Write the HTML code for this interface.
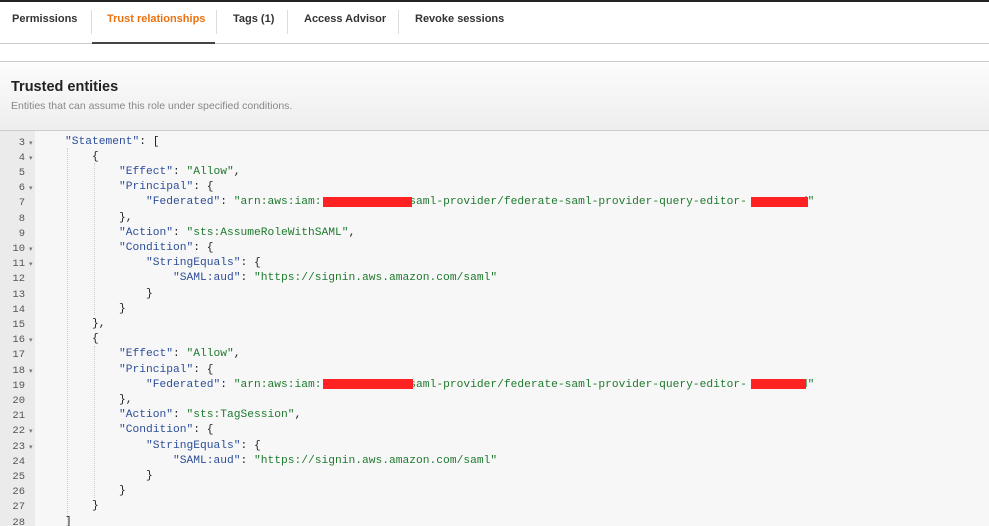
<!DOCTYPE html>
<html><head><style>
*{margin:0;padding:0;box-sizing:border-box}
body{width:989px;height:526px;overflow:hidden;background:#fff;font-family:"Liberation Sans",sans-serif;position:relative}
.top{position:absolute;left:0;top:0;width:989px;height:2px;background:#222}
.tabs{position:absolute;left:0;top:2px;width:989px;height:42px;border-bottom:1px solid #ccc}
.tab{position:absolute;top:11px;font-size:11px;font-weight:bold;color:#333}
.sep{position:absolute;top:8px;width:1px;height:24px;background:#ddd}
.ul{position:absolute;left:92px;top:40px;width:123px;height:2px;background:#444}
.hdr{position:absolute;left:0;top:61px;width:989px;height:70px;border-top:1px solid #ccc;border-bottom:1px solid #ccc;background:linear-gradient(#fcfcfc,#eeeeee)}
.hdr h2{position:absolute;left:11px;top:17px;font-size:14.5px;color:#222}
.hdr p{position:absolute;left:11px;top:38px;font-size:10.5px;color:#888}
.code{position:absolute;left:0;top:131px;width:989px;height:395px;background:#f7f7f7;overflow:hidden}
.gut{position:absolute;left:0;top:0;width:35px;height:395px;background:#ebebeb}
.ln{position:absolute;left:0;width:25px;text-align:right;font-family:"Liberation Mono",monospace;font-size:10.5px;color:#555}
.ar{position:absolute;left:29px;font-size:7px;color:#777}
.cl{position:absolute;white-space:pre;font-family:"Liberation Mono",monospace;font-size:11.25px;color:#222}
.k{color:#2d4e99}.s{color:#1f7a2e}
.red{position:absolute;background:#f22;height:10px}
.g{position:absolute;width:0;border-left:1px dotted #ccc}
</style></head><body>
<div class="top"></div>
<div class="tabs">
<span class="tab" style="left:12px">Permissions</span>
<span class="sep" style="left:91px"></span>
<span class="tab" style="left:107px;color:#ec7211">Trust relationships</span>
<span class="sep" style="left:216px"></span>
<span class="tab" style="left:233px">Tags (1)</span>
<span class="sep" style="left:287px"></span>
<span class="tab" style="left:304px">Access Advisor</span>
<span class="sep" style="left:398px"></span>
<span class="tab" style="left:415px">Revoke sessions</span>
<div class="ul"></div>
</div>
<div class="hdr"><h2>Trusted entities</h2><p>Entities that can assume this role under specified conditions.</p></div>
<div class="code">
<div class="gut"></div>
<div id="c"></div>
</div>
<script>
var L=[
[3,1,1,'<span class="k">"Statement"</span>: ['],
[4,2,1,'{'],
[5,3,0,'<span class="k">"Effect"</span>: <span class="s">"Allow"</span>,'],
[6,3,1,'<span class="k">"Principal"</span>: {'],
[7,4,0,'<span class="k">"Federated"</span>: <span class="s">"arn:aws:iam:             saml-provider/federate-saml-provider-query-editor-        d"</span>'],
[8,3,0,'},'],
[9,3,0,'<span class="k">"Action"</span>: <span class="s">"sts:AssumeRoleWithSAML"</span>,'],
[10,3,1,'<span class="k">"Condition"</span>: {'],
[11,4,1,'<span class="k">"StringEquals"</span>: {'],
[12,5,0,'<span class="k">"SAML:aud"</span>: <span class="s">"https://signin.aws.amazon.com/saml"</span>'],
[13,4,0,'}'],
[14,3,0,'}'],
[15,2,0,'},'],
[16,2,1,'{'],
[17,3,0,'<span class="k">"Effect"</span>: <span class="s">"Allow"</span>,'],
[18,3,1,'<span class="k">"Principal"</span>: {'],
[19,4,0,'<span class="k">"Federated"</span>: <span class="s">"arn:aws:iam:             saml-provider/federate-saml-provider-query-editor-        d"</span>'],
[20,3,0,'},'],
[21,3,0,'<span class="k">"Action"</span>: <span class="s">"sts:TagSession"</span>,'],
[22,3,1,'<span class="k">"Condition"</span>: {'],
[23,4,1,'<span class="k">"StringEquals"</span>: {'],
[24,5,0,'<span class="k">"SAML:aud"</span>: <span class="s">"https://signin.aws.amazon.com/saml"</span>'],
[25,4,0,'}'],
[26,3,0,'}'],
[27,2,0,'}'],
[28,1,0,']']];
var h='';
function T(i){return 4.5+i*15.2;}
L.forEach(function(r,i){
 var t=T(i);
 h+='<div class="ln" style="top:'+(t+1)+'px">'+r[0]+'</div>';
 if(r[2])h+='<div class="ar" style="top:'+(t+3)+'px">&#9662;</div>';
 h+='<div class="cl" style="left:'+(38+27*r[1])+'px;top:'+t+'px">'+r[3]+'</div>';
});
h+='<div class="g" style="left:67px;top:17px;height:378px"></div>';
h+='<div class="g" style="left:94px;top:32px;height:152px"></div>';
h+='<div class="g" style="left:94px;top:215px;height:152px"></div>';
var a=T(4)+0.5,b=T(16)+0.5;
h+='<div class="red" style="left:323px;top:'+a+'px;width:89px"></div>';
h+='<div class="red" style="left:751px;top:'+a+'px;width:57px"></div>';
h+='<div class="red" style="left:323px;top:'+b+'px;width:90px"></div>';
h+='<div class="red" style="left:751px;top:'+b+'px;width:55px"></div>';
document.getElementById('c').innerHTML=h;
</script>
</body></html>
